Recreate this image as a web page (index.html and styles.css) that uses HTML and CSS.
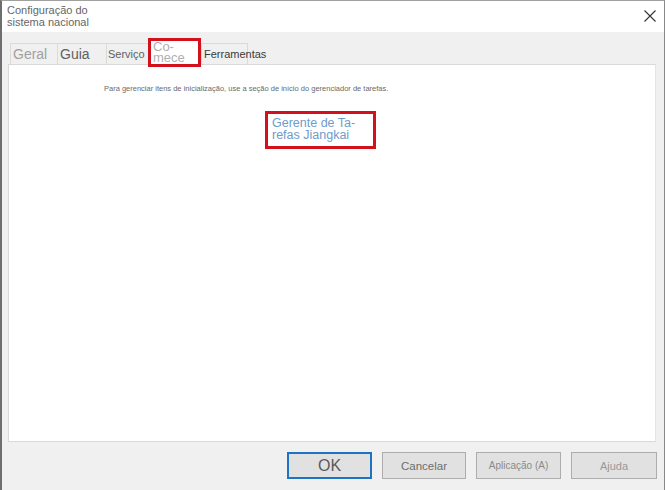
FILE: index.html
```html
<!DOCTYPE html>
<html lang="pt">
<head>
  <meta charset="UTF-8">
  <title>Configuração do sistema nacional</title>
  <link rel="stylesheet" href="styles.css">
</head>
<body>
<div class="window">
  <div class="titlebar">
    <div class="title">Configuração do<br>sistema nacional</div>
    <button class="close" aria-label="Fechar">
      <svg width="12" height="12" viewBox="0 0 12 12">
        <path d="M0.5 0.5 L11.5 11.5 M11.5 0.5 L0.5 11.5" stroke="#333" stroke-width="1.1" fill="none"/>
      </svg>
    </button>
  </div>
  <div class="tabs">
    <div class="tab tab-geral">Geral</div>
    <div class="tab tab-guia">Guia</div>
    <div class="tab tab-servico">Serviço</div>
    <div class="tab tab-comece">Co-<br>mece</div>
    <div class="tab tab-ferramentas">Ferramentas</div>
  </div>
  <div class="panel">
    <p class="hint">Para gerenciar itens de inicialização, use a seção de início do gerenciador de tarefas.</p>
    <div class="link-row">
      <a class="task-link" href="#">Gerente de Ta-<br>refas Jiangkai</a>
    </div>
  </div>
  <div class="buttons">
    <button class="btn btn-ok">OK</button>
    <button class="btn btn-cancel">Cancelar</button>
    <button class="btn btn-apply">Aplicação (A)</button>
    <button class="btn btn-help">Ajuda</button>
  </div>
</div>
</body>
</html>
```

FILE: styles.css
```css
body {
  margin: 0;
  background: #fff;
  font-family: "Liberation Sans", Arial, sans-serif;
}

.window {
  box-sizing: border-box;
  width: 665px;
  height: 490px;
  border-left: 2px solid #6e6e6e;
  border-top: 1px solid #a0a0a0;
  border-right: 1px solid #8a8a8a;
  background: #f0f0f0;
  display: flex;
  flex-direction: column;
}

.titlebar {
  height: 31px;
  background: #fff;
  display: flex;
  justify-content: space-between;
  align-items: flex-start;
  padding-left: 5px;
}

.title {
  font-size: 11px;
  line-height: 11.5px;
  color: #666;
  padding-top: 4px;
}

.close {
  border: 0;
  background: none;
  padding: 0;
  margin: 9px 8px 0 0;
  width: 12px;
  height: 12px;
  display: flex;
}

.tabs {
  height: 32px;
  display: flex;
  align-items: flex-end;
  padding-left: 8px;
  position: relative;
  z-index: 1;
}

.tab {
  box-sizing: border-box;
  height: 21px;
  border: 1px solid #dadada;
  border-bottom: 0;
  border-right: 0;
  display: flex;
  align-items: center;
  white-space: nowrap;
  color: #555;
}

.tab-geral {
  width: 47px;
  padding-left: 2px;
  font-size: 14px;
  color: #a0a0a0;
}

.tab-guia {
  width: 49px;
  padding-left: 2px;
  font-size: 14px;
  color: #606060;
}

.tab-servico {
  width: 42px;
  padding-left: 1px;
  font-size: 11px;
  color: #606060;
}

.tab-comece {
  width: 53px;
  height: 29px;
  margin-bottom: -3px;
  border: 3px solid #d3111d;
  background: #fff;
  padding-left: 2px;
  font-size: 13px;
  line-height: 11px;
  color: #b0b0b0;
  align-items: flex-start;
}

.tab-ferramentas {
  width: 47px;
  border-right: 1px solid #dadada;
  padding-left: 2px;
  font-size: 11px;
  color: #3a3a3a;
  overflow: visible;
}

.panel {
  box-sizing: border-box;
  height: 378px;
  margin: 0 8px 0 6px;
  background: #fff;
  border: 1px solid #d9d9d9;
  border-right-color: #e4e4e4;
}

.hint {
  margin: 19px 0 0 95px;
  font-size: 7.5px;
  color: #6a6a6a;
}

.link-row {
  margin: 18px 0 0 256px;
}

.task-link {
  display: inline-block;
  box-sizing: border-box;
  width: 111px;
  height: 38px;
  border: 3px solid #d3111d;
  padding: 3px 0 0 4px;
  font-size: 12.5px;
  line-height: 12px;
  color: #6e9ccb;
  text-decoration: none;
}

.buttons {
  display: flex;
  gap: 10px;
  padding: 10px 0 0 285px;
}

.btn {
  box-sizing: border-box;
  width: 85px;
  height: 27px;
  background: #e1e1e1;
  border: 1px solid #adadad;
  font-family: "Liberation Sans", Arial, sans-serif;
  font-size: 11px;
  color: #777;
  padding: 0;
}

.btn-ok {
  border: 2px solid #1e74c4;
  font-size: 16px;
  color: #5a5a5a;
}

.btn-cancel {
  width: 84px;
  font-size: 11.5px;
  color: #6e6e6e;
}

.btn-apply {
  font-size: 10px;
  color: #8a8a8a;
}

.btn-help {
  width: 86px;
  color: #999;
}
```
